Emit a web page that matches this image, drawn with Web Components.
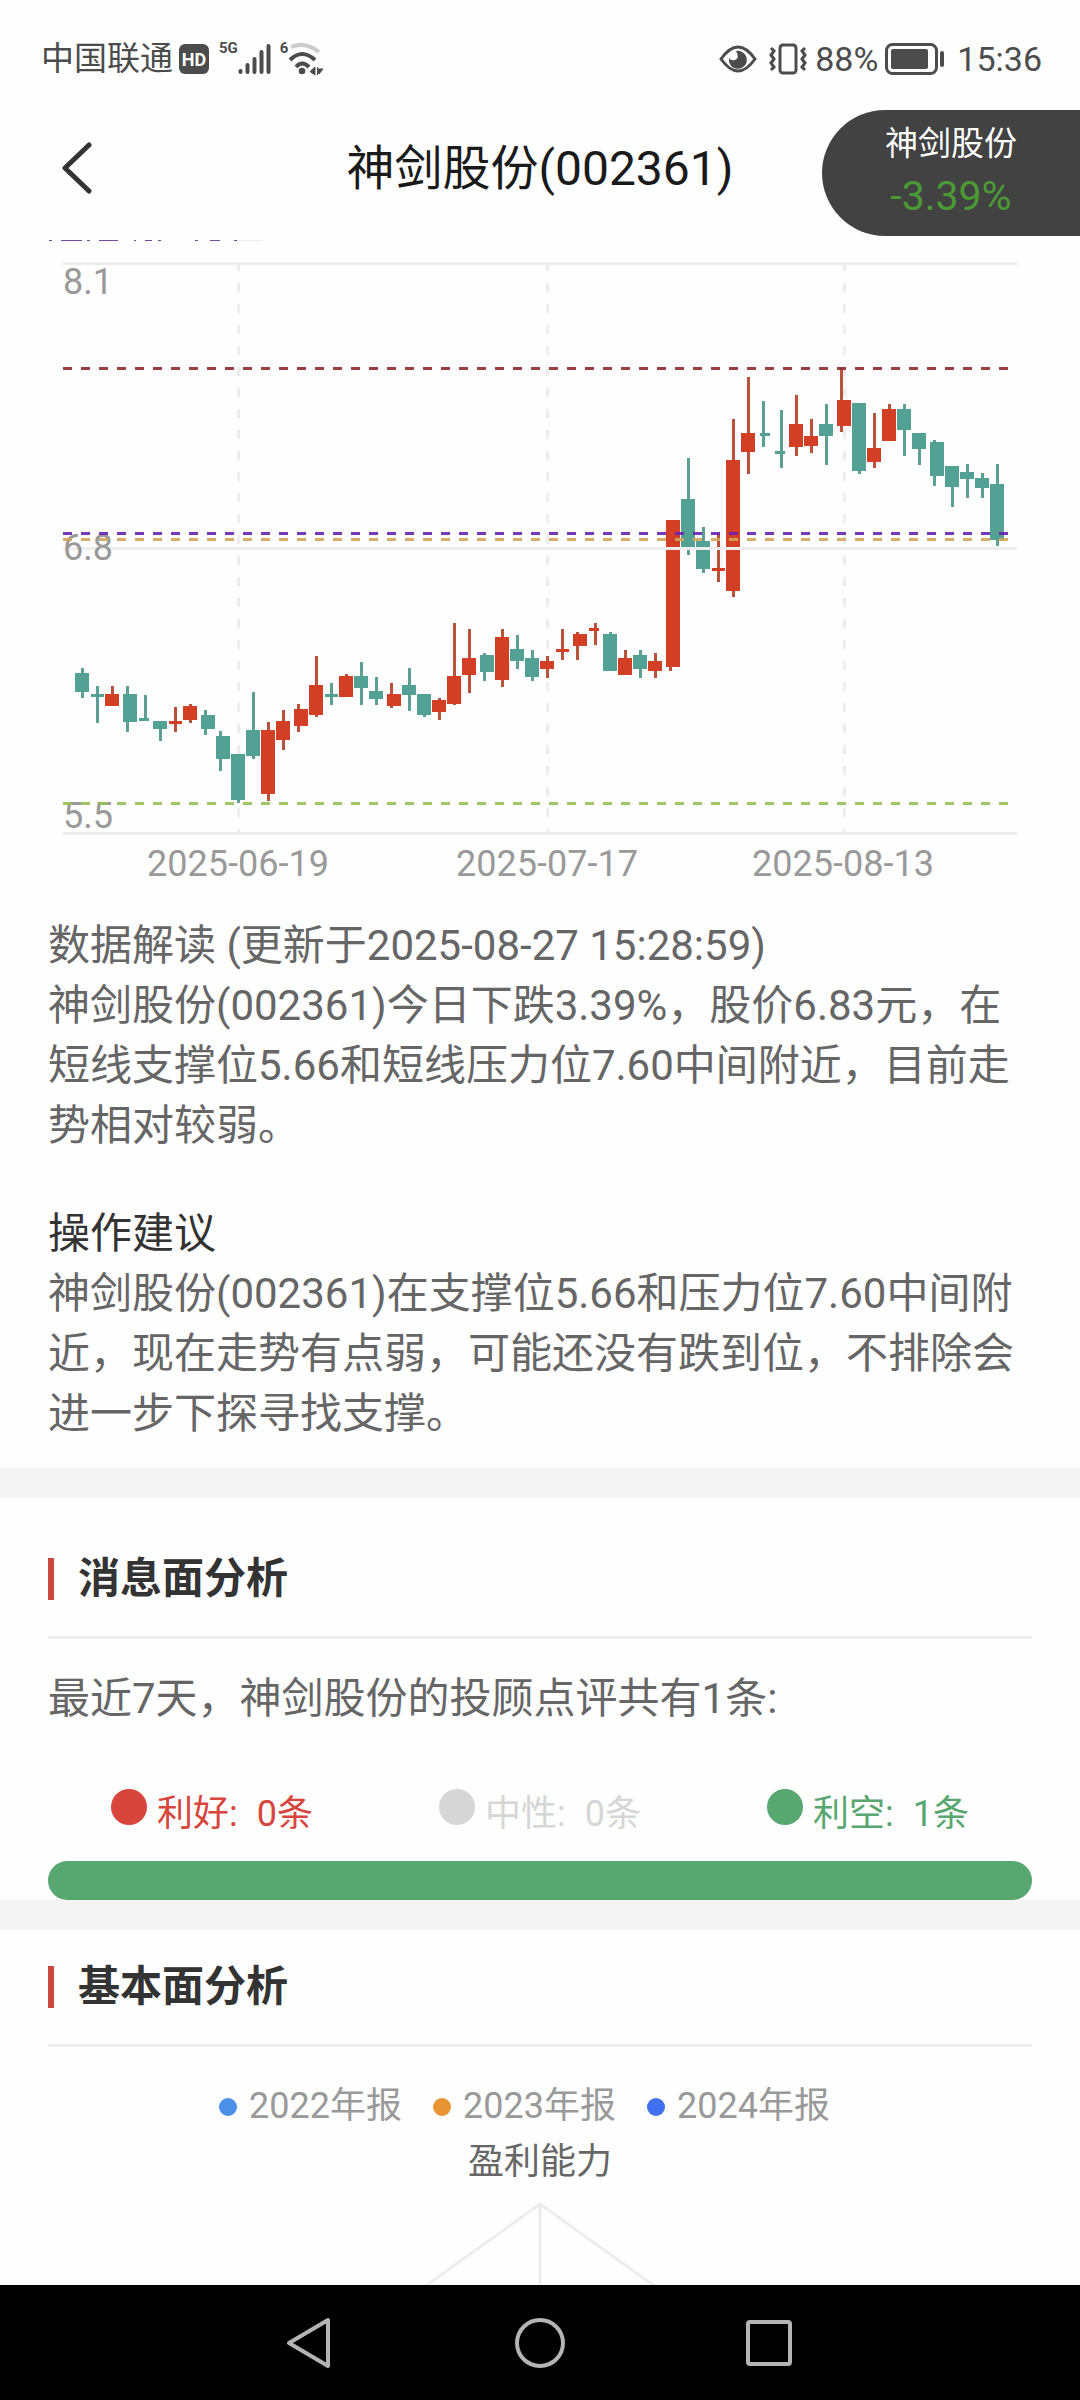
<!DOCTYPE html>
<html lang="zh-CN">
<head>
<meta charset="utf-8">
<meta name="viewport" content="width=device-width, initial-scale=1">
<title>神剑股份(002361)</title>
<style>
  body {
    margin: 0;
    background: #fefefe;
    color: #666;
    font-family: Roboto, "Noto Sans CJK SC", sans-serif;
    font-size: 42px;
    line-height: 60px;
  }
</style>
</head>
<body>
<stock-page></stock-page>

<script>
const define = (name, html, setup) => {
  const template = document.createElement('template');
  template.innerHTML = html;
  customElements.define(name, class extends HTMLElement {
    constructor() {
      super();
      this.attachShadow({ mode: 'open' }).append(template.content.cloneNode(true));
    }
    connectedCallback() {
      if (setup) setup(this, this.shadowRoot);
    }
  });
};

define('status-bar', `
  <style>
    :host { display: flex; justify-content: space-between; align-items: center; height: 110px; padding: 8px 38px 0 41px; box-sizing: border-box; color: #4c4c4c; font-size: 34px; line-height: 40px; }
    div { display: flex; align-items: center; }
    .carrier { font-size: 33px; }
    .hd { width: 30px; height: 30px; margin: 0 10px 0 6px; border-radius: 6px; background: #4c4c4c; color: #fefefe; font: bold 18px/31px Roboto, sans-serif; text-align: center; }
    .tag { align-self: flex-start; font: bold 15px/18px Roboto, sans-serif; }
    svg { display: block; }
    .six { margin-left: 9px; }
    .eye { margin-right: 12px; }
    .vib { margin-right: 8px; }
    .bat { margin: 0 12px 0 7px; }
  </style>
  <div>
    <span class="carrier">中国联通</span>
    <span class="hd">HD</span>
    <span class="tag">5G</span>
    <svg width="33" height="32" viewBox="0 0 33 32" stroke="#4c4c4c" stroke-width="4" stroke-linecap="round"><path d="M2.500 28v1M9.500 22v7M16.500 16v13M23.500 9v20M30.500 3v26"/></svg>
    <span class="tag six">6</span>
    <svg class="wifi" width="36" height="34" viewBox="0 0 36 34" fill="none" stroke="#4c4c4c" stroke-width="4"><path d="M3 5Q17-1 31 10" stroke="#ccc"/><path d="M2 18Q14 6 27 18M8 25Q14 18 21 25"/><circle cx="14" cy="29" r="3.300" fill="#4c4c4c" stroke="none"/><path d="M22 29.500L27 25V33ZM29.500 25V33M29.500 27L35 27L31 32Z" fill="#4c4c4c" stroke-width="1"/></svg>
  </div>
  <div>
    <svg class="eye" width="38" height="28" viewBox="0 0 38 28"><path d="M2 14Q19-10 36 14Q19 38 2 14Z" fill="none" stroke="#4c4c4c" stroke-width="3"/><path d="M17 6A9 9 0 1 1 10 13Q12 16 16 15Q21 13 17 6Z" fill="#4c4c4c"/></svg>
    <svg class="vib" width="38" height="32" viewBox="0 0 38 32" fill="none" stroke="#4c4c4c" stroke-width="3"><rect x="11" y="2" width="16" height="28" rx="3"/><path d="M2 5l3 3-3 4 3 4-3 4 3 4-3 3M36 5l-3 3 3 4-3 4 3 4-3 4 3 3"/></svg>
    <span>88%</span>
    <svg class="bat" width="60" height="32" viewBox="0 0 60 32"><rect x="1.500" y="1.500" width="50" height="29" rx="6" fill="none" stroke="#4c4c4c" stroke-width="3"/><rect x="6" y="6" width="37" height="20" rx="2" fill="#4c4c4c"/><rect x="55" y="8" width="4" height="16" rx="2" fill="#4c4c4c"/></svg>
    <span>15:36</span>
  </div>`);

define('stock-pill', `
  <style>
    :host { display: block; position: absolute; top: 0; right: 0; width: 258px; }
    button { width: 100%; height: 126px; padding: 0 0 6px; border: 0; border-radius: 63px 0 0 63px; background: #424242; color: #fff; font-family: inherit; font-size: 33px; line-height: 52px; }
    span { display: block; }
    .change { font-size: 41px; color: #4c9a35; }
  </style>
  <button type="button"><span><slot></slot></span><span class="change"><slot name="change"></slot></span></button>`);

define('app-header', `
  <style>
    :host { display: flex; position: relative; align-items: center; justify-content: center; height: 130px; padding-bottom: 12px; box-sizing: border-box; color: #1a1a1a; }
    h1 { margin: 0; font-size: 48px; font-weight: 400; }
    .side { flex: 1; padding-left: 56px; }
    button { display: block; border: 0; padding: 4px; background: none; }
    svg { display: block; }
  </style>
  <div class="side"><button type="button" aria-label="返回"><svg width="36" height="54" viewBox="0 0 36 54" fill="none" stroke="#333" stroke-width="5" stroke-linecap="round" stroke-linejoin="round"><path d="M29 3L5 26L29 49"/></svg></button></div>
  <h1><slot></slot></h1>
  <div class="side"></div>
  <slot name="pill"></slot>`);

/* One row per trading day: direction, body left, body width, body top, body bottom, wick left, wick top, wick bottom */
const DAYS = `
g 75 14 673 692 81 668 698|g 91 13 694 697 96 686 723|r 105 14 694 706 111 686 706|g 123 14 694 722 126 686 732
g 139 10 718 721 144 695 721|g 153 14 721 729 159 721 741|r 169 13 721 724 174 707 732|r 183 14 706 720 189 704 723
g 201 14 715 729 204 710 735|g 216 14 736 759 219 731 771|g 231 14 754 800 237 754 803|g 246 14 730 756 252 692 759
r 261 14 730 794 267 722 801|r 276 14 721 740 282 710 750|r 294 14 709 726 297 704 732|r 309 14 685 715 315 656 717
g 325 13 694 697 330 683 705|r 339 14 676 697 345 674 697|g 354 14 676 688 360 662 705|g 369 14 691 699 375 677 705
r 387 14 694 706 390 683 708|g 402 14 685 695 408 668 711|g 417 14 694 715 423 694 717|r 432 14 700 712 438 698 720
r 447 14 676 704 453 623 705|r 462 14 658 675 468 629 693|g 480 14 655 672 483 653 681|r 495 14 637 680 501 629 687
g 510 14 649 661 516 635 669|g 525 14 658 677 531 650 681|r 540 14 661 669 546 656 678|r 556 13 649 652 561 629 660
r 573 14 634 646 576 632 660|r 589 10 628 631 594 623 645|g 603 14 634 671 609 632 671|r 618 14 658 675 624 650 675
g 633 14 655 669 639 650 678|r 648 14 661 671 654 653 678|r 666 14 520 667 669 520 671|g 681 14 499 547 687 458 555
g 696 14 541 569 702 527 573|r 712 13 568 571 717 533 582|r 726 14 460 591 732 419 597|r 741 14 433 452 747 377 474
g 760 10 433 436 762 401 447|g 775 10 451 454 780 410 468|r 789 14 424 447 795 395 456|r 804 14 436 446 810 419 453
g 819 14 424 436 825 404 465|r 837 14 400 426 840 368 432|g 852 14 403 471 858 403 474|r 867 14 448 462 873 413 468
r 882 14 409 441 888 404 441|g 897 14 409 430 903 404 456|g 912 14 433 449 918 433 465|g 930 14 442 476 933 440 486
g 945 14 466 487 951 466 507|g 960 14 472 479 966 464 498|g 975 14 478 488 981 473 498|g 990 14 484 540 996 464 546`
  .trim().split(/[|\n]/).map(row => row.split(' '));

define('kline-chart', `
  <style>
    :host { display: block; }
    svg { display: block; width: 100%; }
    text { font-size: 36px; fill: #999; }
    .grid { stroke: #ededed; stroke-width: 3; }
    .levels { stroke-width: 3; stroke-dasharray: 9 9; opacity: .9; }
    g, path { shape-rendering: crispEdges; }
  </style>
  <svg viewBox="0 240 1080 660" role="img" aria-label="K线图">
    <path d="M49 240h3M61 240h21M87 240h3M99 240h19M134 240h2M145 240h7M158 240h3M195 240h3M210 240h10M234 240h3" stroke="#7a4a9e" stroke-width="2"/>
    <path d="M237 240h25" stroke="#ededed" stroke-width="2"/>
    <g class="grid">
      <path d="M238.500 262V832M547.500 262V832M844.500 262V832" stroke-dasharray="9 12"/>
    </g>
    <g class="days"></g>
    <g class="grid"><path d="M63 263.500H1017M63 548.500H1017M63 833.500H1017"/></g>
    <text x="63" y="294">8.1</text>
    <text x="63" y="560">6.8</text>
    <text x="63" y="828">5.5</text>
    <g class="levels">
      <path d="M63 368.500H1008" stroke="#902c2c"/>
      <path d="M63 533.500H1008" stroke="#6a22b4"/>
      <path d="M63 539.500H1008" stroke="#d3a558"/>
      <path d="M63 803.500H1008" stroke="#95c355"/>
    </g>
    <g text-anchor="middle">
      <text x="238" y="876">2025-06-19</text>
      <text x="547" y="876">2025-07-17</text>
      <text x="843" y="876">2025-08-13</text>
    </g>
  </svg>`, (host, root) => {
  const ns = 'http://www.w3.org/2000/svg';
  const layer = root.querySelector('.days');
  layer.replaceChildren();
  const bar = (x, y, width, height, fill) => {
    const rect = document.createElementNS(ns, 'rect');
    Object.entries({ x, y, width, height, fill }).forEach(([k, v]) => rect.setAttribute(k, v));
    layer.append(rect);
  };
  for (const [dir, bx, bw, top, bottom, wx, high, low] of DAYS) {
    bar(wx, high, 3, low - high, dir === 'g' ? '#5c9f93' : '#b8523a');
    bar(bx, top, bw, bottom - top, dir === 'g' ? '#53a195' : '#d23f24');
  }
});

define('text-note', `
  <style>
    :host { display: block; }
    h3, p { margin: 0; font-size: inherit; font-weight: 400; }
    :host([strong]) h3 { color: #333; }
  </style>
  <h3><slot name="title"></slot></h3>
  <p><slot></slot></p>`);

define('panel-section', `
  <style>
    :host { display: block; border-top: 30px solid #f4f4f4; padding: var(--panel-top, 36px) 48px 0; }
    h2 { display: flex; align-items: center; gap: 24px; margin: 0; padding-bottom: 36px; border-bottom: 3px solid #ededed; color: #333; font-size: 42px; line-height: 42px; }
    h2::before { content: ""; width: 6px; height: 42px; background: #cb4a3f; }
  </style>
  <h2><slot name="title"></slot></h2>
  <slot></slot>`);

define('sentiment-count', `
  <style>
    :host { display: flex; flex: 1; justify-content: center; color: var(--tone); font-size: 36px; line-height: 50px; }
    i { width: 36px; height: 36px; margin-right: 10px; border-radius: 50%; background: var(--tone); }
    b { margin-left: 10px; font-weight: 400; }
  </style>
  <i></i><span><slot></slot>: <b><slot name="count"></slot></b></span>`);

define('report-key', `
  <style>
    :host { display: flex; align-items: center; margin-right: 31px; color: #999; font-size: 36px; line-height: 54px; }
    i { width: 18px; height: 18px; margin: 2px 12px 0 0; border-radius: 50%; background: var(--tone); }
  </style>
  <i></i><slot></slot>`);

define('radar-top', `
  <style>
    :host { display: block; text-align: center; font-size: 36px; line-height: 54px; }
    svg { display: block; margin: 0 auto; }
  </style>
  <slot></slot>
  <svg width="240" height="96" viewBox="0 0 240 96" fill="none" stroke="#ededed" stroke-width="3"><path d="M0 101L120 15L240 101"/><path d="M120 15V96"/></svg>`);

define('nav-bar', `
  <style>
    :host { display: flex; justify-content: center; gap: 169px; height: 116px; background: #000; }
    button { display: flex; align-items: center; border: 0; padding: 0; background: none; }
  </style>
  <button type="button" aria-label="后退"><svg width="60" height="60" viewBox="0 0 60 60" fill="none" stroke="#b4b4b4" stroke-width="4" stroke-linejoin="round"><path d="M47 7V53L8 30Z"/></svg></button>
  <button type="button" aria-label="主页"><svg width="60" height="60" viewBox="0 0 60 60" fill="none" stroke="#b4b4b4" stroke-width="4"><circle cx="30" cy="30" r="23"/></svg></button>
  <button type="button" aria-label="最近任务"><svg width="60" height="60" viewBox="0 0 60 60" fill="none" stroke="#b4b4b4" stroke-width="4"><rect x="9" y="9" width="42" height="42" rx="2"/></svg></button>`);

define('stock-page', `
  <style>
    :host { display: flex; flex-direction: column; }
    .notes { display: flex; flex-direction: column; gap: 48px; padding: 16px 48px 24px; }
    .news { --panel-top: 60px; }
    .lead { margin: 0; padding: 30px 0 60px; }
    .counts { display: flex; height: 72px; }
    .meter { height: 39px; border-radius: 20px; background: #58a770; }
    .keys { display: flex; justify-content: center; padding: 32px 0 2px; }
  </style>
  <status-bar></status-bar>
  <app-header>神剑股份(002361)<stock-pill slot="pill">神剑股份<span slot="change">-3.39%</span></stock-pill></app-header>
  <main>
    <kline-chart></kline-chart>
    <div class="notes">
      <text-note><span slot="title">数据解读 (更新于2025-08-27 15:28:59)</span>神剑股份(002361)今日下跌3.39%，股价6.83元，在短线支撑位5.66和短线压力位7.60中间附近，目前走势相对较弱。</text-note>
      <text-note strong><span slot="title">操作建议</span>神剑股份(002361)在支撑位5.66和压力位7.60中间附近，现在走势有点弱，可能还没有跌到位，不排除会进一步下探寻找支撑。</text-note>
    </div>
    <panel-section class="news"><span slot="title">消息面分析</span>
      <p class="lead">最近7天，神剑股份的投顾点评共有1条:</p>
      <div class="counts">
        <sentiment-count style="--tone:#d8453c">利好<span slot="count">0条</span></sentiment-count>
        <sentiment-count style="--tone:#d6d6d6">中性<span slot="count">0条</span></sentiment-count>
        <sentiment-count style="--tone:#58a770">利空<span slot="count">1条</span></sentiment-count>
      </div>
      <div class="meter"></div>
    </panel-section>
    <panel-section><span slot="title">基本面分析</span>
      <div class="keys">
        <report-key style="--tone:#4a90e8">2022年报</report-key>
        <report-key style="--tone:#e89434">2023年报</report-key>
        <report-key style="--tone:#3f70f2">2024年报</report-key>
      </div>
      <radar-top>盈利能力</radar-top>
    </panel-section>
  </main>
  <nav-bar></nav-bar>`);
</script>
</body>
</html>
